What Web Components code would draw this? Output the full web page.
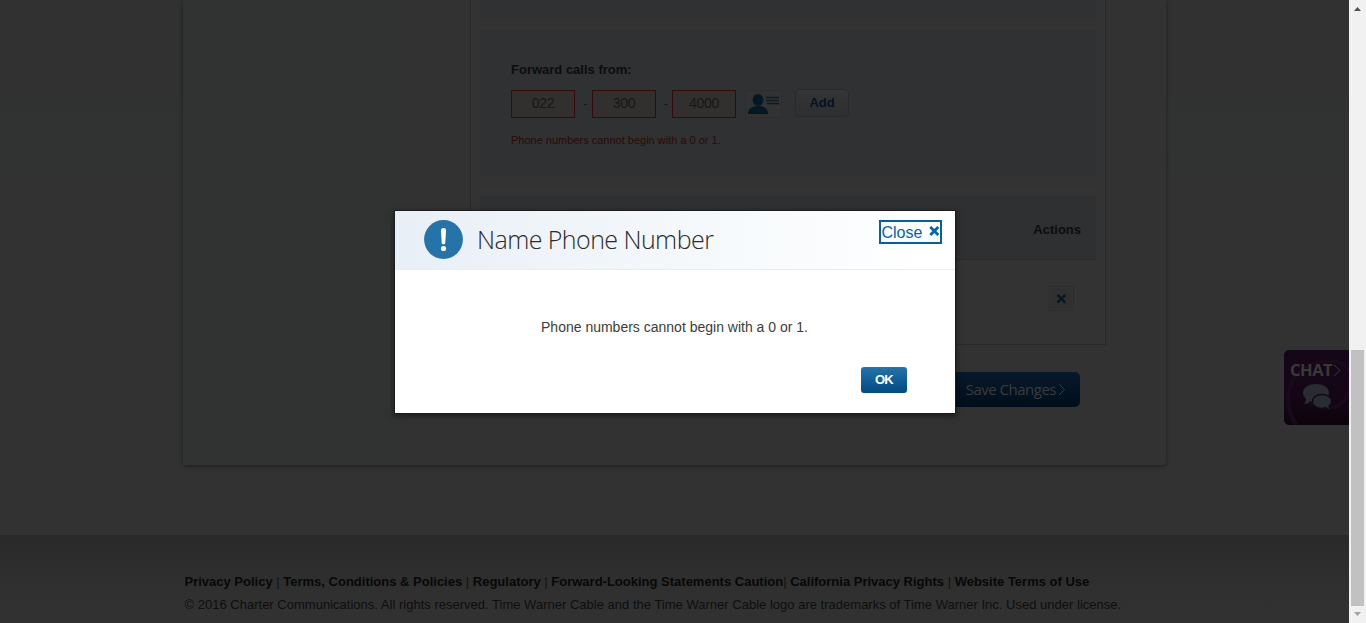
<!DOCTYPE html>
<html lang="en">
<head>
<meta charset="utf-8">
<title>Call Forwarding</title>
<style>
html,body{margin:0;height:100%;overflow:hidden}
body{font-family:"Liberation Sans",Arial,sans-serif;background:#323232}
</style>
</head>
<body>
<voice-page></voice-page>
<script>
const define=(name,html)=>customElements.define(name,class extends HTMLElement{
  constructor(){super();this.attachShadow({mode:'open'}).innerHTML=html;}
});

define('digit-box',`<style>
:host{display:block;box-sizing:border-box;width:64px;height:28px;border:1px solid #360a08;background:#322f2f;color:#171717;font-size:14px;line-height:25px;text-align:center;letter-spacing:-.3px}
</style><slot></slot>`);

define('contact-picker',`<style>
:host{display:block;box-sizing:border-box;width:37px;height:28px;border:1px solid #2d2e2f;background:#323232}
svg{display:block}
</style><svg width="35" height="26" viewBox="0 0 35 26"><ellipse cx="12" cy="9" rx="5.4" ry="6" fill="#031826"/><path d="M2 23c0-5 3-7 8-8h4c5 1 8 3 8 8z" fill="#031826"/><path d="M20 6.500h13M20 9.500h13M21 12.500h12" stroke="#0b1c27" stroke-width="1.400"/></svg>`);

define('add-button',`<style>
:host{display:block;box-sizing:border-box;width:54px;height:28px;border:1px solid #292a2a;border-radius:4px;background:linear-gradient(#343434,#2f2f2f);color:#041226;font:bold 13px/25px "Liberation Sans",Arial,sans-serif;text-align:center;letter-spacing:-.1px}
</style><slot></slot>`);

define('remove-button',`<style>
:host{display:block;box-sizing:border-box;width:25px;height:25px;border:1px solid #2d2d2d;background:#303030;box-shadow:inset 0 0 0 1px #343434}
svg{display:block}
</style><svg width="23" height="23" viewBox="0 0 23 23"><path d="M7.500 7.800l7.800 7.800M15.300 7.800L7.500 15.600" stroke="#071726" stroke-width="2.600"/></svg>`);

define('forward-form',`<style>
:host{display:block;box-sizing:border-box;height:146px;padding:31px 30px 0 31px;background:#303132}
h2{margin:0;font-size:13px;line-height:18px;color:#0d0d0d}
.row{display:flex;margin-top:11px;align-items:center}
.dash{width:17px;font-size:13px;line-height:27px;align-self:flex-start;text-align:center;text-indent:4px;color:#171717}
.dash+digit-box+.dash{width:16px}
contact-picker{margin-left:9px}
add-button{margin:-1px 0 0 13px;align-self:flex-start}
p{margin:14px 0 0;font-size:11px;line-height:16px;color:#2c0a08}
</style>
<h2>Forward calls from:</h2>
<div class="row"><digit-box>022</digit-box><span class="dash">-</span><digit-box>300</digit-box><span class="dash">-</span><digit-box>4000</digit-box><contact-picker></contact-picker><add-button>Add</add-button></div>
<p>Phone numbers cannot begin with a 0 or 1.</p>`);

define('number-table',`<style>
:host{display:block}
.head{box-sizing:border-box;height:64px;background:#2e3031;border-bottom:1px solid #292a2a;padding:25px 15px 0 0;text-align:right;font-weight:bold;font-size:13px;line-height:18px;color:#0d0d0d}
.line{display:flex;justify-content:flex-end;padding:26px 22px 0 0}
</style><div class="head">Actions</div><div class="line"><remove-button></remove-button></div>`);

define('settings-panel',`<style>
:host{display:block;box-sizing:border-box;width:636px;height:345px;border:solid #292929;border-width:0 1px 1px;background:#333;padding:0 9px}
.prev{height:19px;background:#303132}
forward-form{margin-top:11px}
.rule{border-top:1px dotted #2d2d2d;margin:9px 0 10px 2px}
</style><div class="prev"></div><forward-form></forward-form><div class="rule"></div><number-table></number-table>`);

define('save-button',`<style>
:host{display:flex;box-sizing:border-box;width:150px;height:35px;border-radius:5px;background:linear-gradient(#07192a,#010e1b);color:#3a3b3c;font:500 15px/34px "Open Sans",sans-serif;align-items:center;justify-content:flex-end;padding-right:14px;letter-spacing:-.5px}
span{margin-top:-2px}
svg{margin-left:2px}
</style><span><slot></slot></span><svg width="8" height="13" viewBox="0 0 8 13" fill="none" stroke="#3a3b3c"><path d="M1 1l5.500 5.500L1 12"/></svg>`);

define('content-card',`<style>
:host{display:flex;width:983px;height:465px;background:#323232;box-shadow:0 1px 4px rgba(0,0,0,.45);border-radius:0 0 3px 3px}
.side{width:221px;background:linear-gradient(90deg,#303332,#313332)}
.main{width:730px;box-sizing:border-box;padding-left:66px;height:415px}
save-button{margin:27px 0 0 460px}
</style><div class="side"></div><div class="main"><settings-panel></settings-panel><save-button>Save Changes</save-button></div>`);

define('site-footer',`<style>
:host{display:block;box-sizing:border-box;height:88px;padding:36px 0 0 184.5px;background:linear-gradient(#2a2a2a,#313131 80%);font-size:13px;white-space:nowrap;color:#111}
nav,div{line-height:21px}
.copy{margin-top:2px;letter-spacing:.01px;color:#0e0e0e}
b{color:#080808}
</style><nav><b>Privacy Policy</b> | <b>Terms, Conditions &amp; Policies</b> | <b>Regulatory</b> | <b>Forward-Looking Statements Caution</b>| <b>California Privacy Rights</b> | <b>Website Terms of Use</b></nav>
<div class="copy">© 2016 Charter Communications. All rights reserved. Time Warner Cable and the Time Warner Cable logo are trademarks of Time Warner Inc. Used under license.</div>`);

define('chat-tab',`<style>
:host{display:block;box-sizing:border-box;width:65px;height:75px;border-radius:5px 0 0 5px;background:linear-gradient(#140717,#140616 60%,#0c040b);color:#393939;overflow:hidden;padding:8px 0 0 6px;font:700 16.5px/24px "Open Sans",sans-serif;position:relative}
.swirl{position:absolute;left:0;top:0}
.t,.b{position:relative}
.t{display:flex;align-items:center;letter-spacing:-.5px}
.b{display:block;margin:0 0 0 12px}
</style><svg class="swirl" width="65" height="75" fill="none" stroke="#180a1b" stroke-width="4"><path d="M12 75C-6 45 8 14 40 11c14-1 22 4 26 9M65 42c-8 22-32 18-42 8"/></svg><div class="t"><slot></slot><svg width="9" height="13" viewBox="0 0 9 13" fill="none" stroke="#393939" style="margin-left:1px"><path d="M1 1l6 5.500L1 12"/></svg></div>
<svg class="b" width="32" height="30" viewBox="0 0 32 30"><path d="M14 2c7 0 13 3 13 9s-6 9-13 9c-2 0-4 0-6-1-1 2-3 3-6 3 1-1 2-3 2-5C2 15 1 13 1 11c0-6 6-9 13-9z" fill="#292c32"/><path d="M20 12.500c5 0 9.500 2.500 9.500 7 0 2-1 3.500-2.500 4.500 0 2 1 3 2 4-3 0-4-1-5-2.300-7 1.800-13.500-.7-13.500-6.200 0-4.500 4.500-7 9.500-7z" fill="#292c32" stroke="#140717" stroke-width="1.300"/></svg>`);

define('page-scrollbar',`<style>
:host{display:flex;flex-direction:column;width:17px;height:623px;background:#f1f1f1;align-items:center}
svg{display:block;flex:none}
.thumb{width:13px;height:256px;margin-top:333px;background:#c1c1c1}
</style><svg width="17" height="17"><path d="M5 11l3.500-4 3.500 4z" fill="#505050"/></svg><div class="thumb"></div><svg width="17" height="17"><path d="M5 6h7l-3.500 4z" fill="#a3a3a3"/></svg>`);

define('close-link',`<style>
:host{display:flex;box-sizing:border-box;width:63px;height:24px;border:2px solid #0060a9;color:#0063b1;font-size:16px;line-height:21px;padding-left:.5px;background:#fff}
svg{margin:4px 0 0 6.500px;flex:none}
</style><slot></slot><svg width="11" height="10" viewBox="0 0 11 10"><path d="M1.300 1l8 8M9.300 1l-8 8" stroke="#0063b1" stroke-width="2.800"/></svg>`);

define('ok-button',`<style>
:host{display:block;width:46px;height:26px;border-radius:3px;background:linear-gradient(#2373ac,#004b82);color:#fff;font:bold 13px/26px "Liberation Sans",Arial,sans-serif;text-align:center;letter-spacing:-.8px}
</style><slot></slot>`);

define('alert-dialog',`<style>
:host{display:flex;flex-direction:column;width:560px;height:202px;background:#fff;box-shadow:0 0 0 1px #1d1d1f,0 2px 6px 1px rgba(0,0,0,.5)}
header{display:flex;box-sizing:border-box;height:59px;padding:9px 13px 0 29px;border-bottom:1px solid #eaeced;background:linear-gradient(90deg,#e8eff6,#f4f8fb 50%,#fff 95%)}
header>svg{flex:none}
h1{margin:-1px 0 0 14px;flex:1;font:300 25px/40px "Open Sans",sans-serif;color:#2a2a2a;letter-spacing:-.56px;white-space:nowrap}
p{margin:47px 0 0;text-align:center;font-size:14px;line-height:20px;color:#3c3c3c;padding-right:1px}
ok-button{margin:30px 48px 0 auto}
</style><header><svg width="39" height="39" viewBox="0 0 39 39"><circle cx="19.500" cy="19.500" r="19.400" fill="#2574a9"/><path d="M17 10.500c0-3.200 5-3.200 5 0l-.7 12.200c-.2 2.200-3.400 2.200-3.600 0z" fill="#fff"/><circle cx="19.500" cy="28.500" r="2.600" fill="#fff"/></svg><h1><slot name="title"></slot></h1><close-link>Close</close-link></header><p><slot></slot></p><ok-button>OK</ok-button>`);

define('voice-page',`<style>
:host{display:flex;position:relative;width:1366px;height:623px;overflow:hidden}
.page{width:1349px;background:linear-gradient(#313131 0,#313131 92px,#303332 112px,#303332 150px,#323232 175px,#323232 100%)}
content-card{margin:0 0 70px 183px}
alert-dialog{position:absolute;left:395px;top:211px}
chat-tab{position:absolute;left:1284px;top:350px}
</style><div class="page"><content-card></content-card><site-footer></site-footer></div><page-scrollbar></page-scrollbar>
<chat-tab>CHAT</chat-tab>
<alert-dialog><span slot="title">Name Phone Number</span>Phone numbers cannot begin with a 0 or 1.</alert-dialog>`);
</script>
</body>
</html>
